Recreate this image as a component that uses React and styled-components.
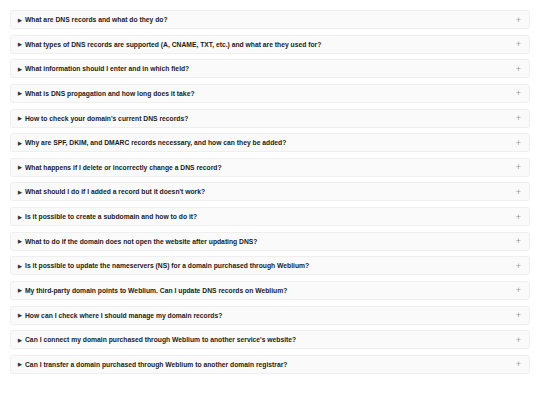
import styled, { createGlobalStyle } from "styled-components";

const GlobalStyle = createGlobalStyle`
  body {
    margin: 0;
    background: #ffffff;
    font-family: "Liberation Sans", Arial, sans-serif;
  }
`;

const List = styled.div`
  display: flex;
  flex-direction: column;
  gap: 5.64px;
  padding: 10px 10px;
`;

const Item = styled.details`
  background: #fafafa;
  border: 1px solid #efefef;
  border-radius: 3px;
`;

const Summary = styled.summary`
  display: flex;
  align-items: center;
  justify-content: space-between;
  height: 17px;
  padding: 0 8px 0 7px;
  font-size: 6.75px;
  font-weight: 700;
  color: #1a1a1a;
  cursor: pointer;
  list-style: none;
  &::-webkit-details-marker {
    display: none;
  }
`;

const Question = styled.span`
  display: flex;
  align-items: center;
  gap: 3px;
`;

const Marker = styled.span`
  font-size: 5px;
  color: #333;
`;

const Plus = styled.span`
  font-size: 9px;
  font-weight: 300;
  color: #9a9a9a;
`;

const questions = [
  "What are DNS records and what do they do?",
  "What types of DNS records are supported (A, CNAME, TXT, etc.) and what are they used for?",
  "What information should I enter and in which field?",
  "What is DNS propagation and how long does it take?",
  "How to check your domain's current DNS records?",
  "Why are SPF, DKIM, and DMARC records necessary, and how can they be added?",
  "What happens if I delete or incorrectly change a DNS record?",
  "What should I do if I added a record but it doesn't work?",
  "Is it possible to create a subdomain and how to do it?",
  "What to do if the domain does not open the website after updating DNS?",
  "Is it possible to update the nameservers (NS) for a domain purchased through Weblium?",
  "My third-party domain points to Weblium. Can I update DNS records on Weblium?",
  "How can I check where I should manage my domain records?",
  "Can I connect my domain purchased through Weblium to another service's website?",
  "Can I transfer a domain purchased through Weblium to another domain registrar?",
];

const App = () => {
  return (
    <>
      <GlobalStyle />
      <List>
        {questions.map((q, index) => (
          <Item key={index}>
            <Summary>
              <Question>
                <Marker>▶</Marker>
                {q}
              </Question>
              <Plus>+</Plus>
            </Summary>
          </Item>
        ))}
      </List>
    </>
  );
};

export default App;
